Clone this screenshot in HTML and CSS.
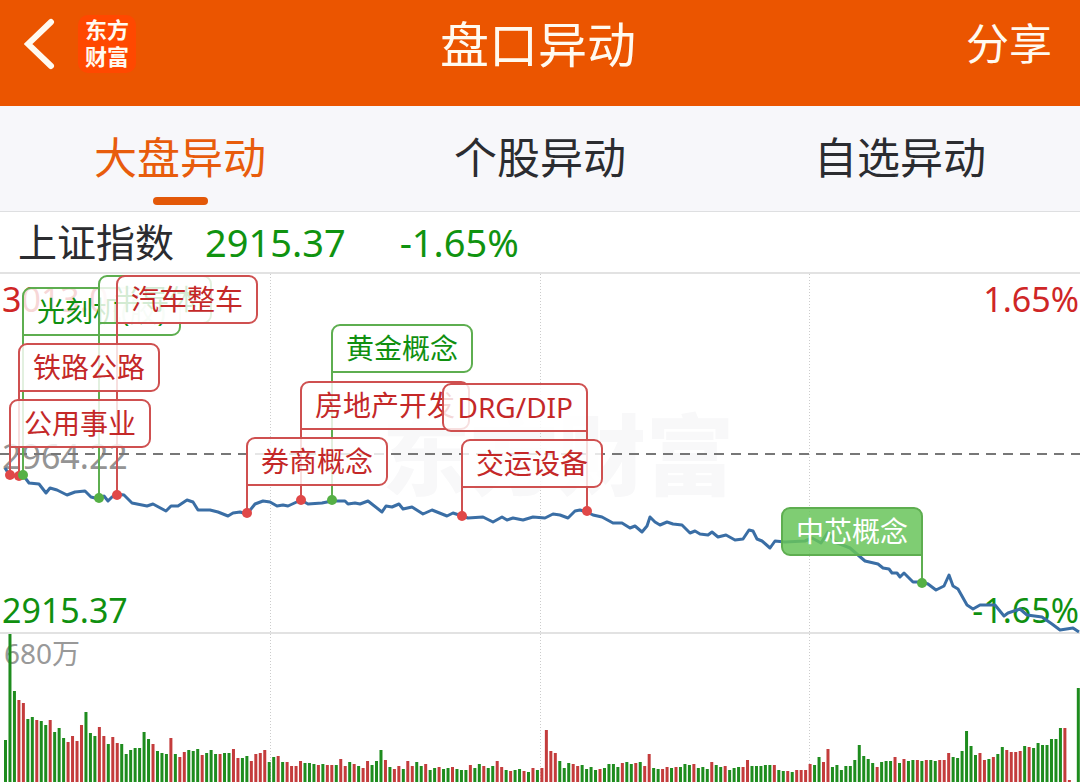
FILE: index.html
```html
<!DOCTYPE html>
<html lang="zh-CN">
<head>
<meta charset="utf-8">
<meta name="viewport" content="width=device-width, initial-scale=1">
<title>盘口异动</title>
<link rel="stylesheet" href="styles.css">
</head>
<body>
<header class="topbar">
  <div class="topbar-start">
    <button class="back" type="button" aria-label="返回">
      <svg class="back-icon" viewBox="0 0 32 52" aria-hidden="true"><path d="M27 4 4 26 27 48"/></svg>
    </button>
    <div class="logo">东方<br>财富</div>
  </div>
  <h1 class="title">盘口异动</h1>
  <button class="share" type="button">分享</button>
</header>
<nav class="tabs">
  <button class="tab tab-active" type="button">大盘异动</button>
  <button class="tab" type="button">个股异动</button>
  <button class="tab" type="button">自选异动</button>
</nav>
<main>
  <section class="quote">
    <h2 class="quote-name">上证指数</h2>
    <span class="quote-price">2915.37</span>
    <span class="quote-change">-1.65%</span>
  </section>
  <section class="chart" aria-label="上证指数分时图">
    <div class="watermark" aria-hidden="true">东方财富</div>
    <span class="axis axis-high up">3013.07</span>
    <span class="axis axis-high axis-right up">1.65%</span>
    <span class="axis axis-mid">2964.22</span>
    <span class="axis axis-low down">2915.37</span>
    <span class="axis axis-low axis-right down">-1.65%</span>
    <span class="axis axis-volume">680万</span>
    <svg class="plot" viewBox="0 272 1080 510" preserveAspectRatio="none" aria-hidden="true">
      <path class="grid" d="M270.5 274V782M540.5 274V782M809.5 274V782"/>
      <path class="rule" d="M0 273H1080M0 633H1080"/>
      <path class="mid" d="M0 454H1080"/>
      <g id="volume"></g>
      <polyline class="price" points="5,468 10,476 23,475 29,483 39,484 46,493 50,488 57,490 67,495 75,492 85,491 91,497 99,499 104,496 108,501 112,497 117,494 124,495 132,503 147,506 153,504 166,511 171,506 178,506 187,500 193,502 198,510 210,510 218,512 228,516 233,513 240,512 247,514 255,504 263,501 270,502 277,506 283,505 288,506 301,500 308,504 322,503 332,501 345,501 348,504 355,503 360,504 368,501 382,512 386,506 392,507 399,504 403,509 412,507 423,514 432,510 447,516 453,513 462,516 468,518 483,517 493,522 502,517 507,520 513,518 523,520 533,517 545,518 553,514 560,515 568,518 575,511 580,510 587,512 593,515 602,517 613,523 622,523 630,528 635,526 642,532 647,526 650,517 655,522 660,525 667,522 673,524 682,525 690,533 695,531 700,534 708,535 712,532 718,537 726,535 735,540 743,539 749,530 753,531 757,539 762,541 770,548 775,541 785,542 805,541 812,538 821,543 828,532 835,542 850,548 858,555 865,561 878,564 883,568 889,569 892,573 897,573 900,577 904,573 913,582 922,582 928,584 936,590 944,586 949,575 953,586 958,589 967,605 973,609 980,605 995,605 1004,616 1008,613 1020,609 1027,615 1042,617 1052,624 1060,630 1073,628 1079,632"/>
    </svg>
    <div id="flags"></div>
  </section>
</main>
<script src="chart.js"></script>
</body>
</html>
```
FILE: styles.css
```css
* { box-sizing: border-box; }

body {
  margin: 0;
  background: #fff;
  color: #2b2c30;
  font-family: "Noto Sans", "Noto Sans CJK SC", sans-serif;
}

button {
  padding: 0;
  border: 0;
  background: none;
  color: inherit;
  font: inherit;
  cursor: pointer;
}

.topbar {
  display: grid;
  grid-template-columns: 1fr auto 1fr;
  align-items: center;
  height: 106px;
  padding: 0 28px 18px 24px;
  background: #eb5500;
  color: #fffaf0;
}
.topbar-start { display: flex; align-items: center; gap: 22px; }
.back { display: flex; }
.back-icon { width: 32px; height: 52px; fill: none; stroke: currentColor; stroke-width: 6; stroke-linecap: round; }
.logo {
  width: 58px;
  padding: 0 0 4px;
  border-radius: 10px;
  background: #ff4800;
  font: 700 22px/27px "Noto Sans CJK SC", sans-serif;
  text-align: center;
}
.title { margin: 0; font-size: 49px; font-weight: 400; line-height: 60px; }
.share { justify-self: end; font-size: 43px; line-height: 60px; }

.tabs {
  display: grid;
  grid-template-columns: repeat(3, 1fr);
  height: 106px;
  border-bottom: 1px solid #dedfe1;
  background: #f7f7fa;
}
.tab {
  display: flex;
  flex-direction: column;
  align-items: center;
  gap: 7px;
  padding-top: 20px;
  font-size: 43px;
  line-height: 64px;
}
.tab-active { color: #e85c0c; }
.tab-active::after { content: ""; width: 55px; height: 8px; border-radius: 4px; background: #e35808; }

.quote {
  display: flex;
  align-items: center;
  height: 60px;
  padding-left: 18px;
  font-size: 38px;
  line-height: 60px;
}
.quote-name { margin: 0; font-size: 39px; font-weight: 400; }
.quote-price { margin-left: 31px; color: #109310; }
.quote-change { margin-left: 54px; color: #109310; }

.chart { position: relative; height: 510px; overflow: hidden; }
.plot { position: absolute; inset: 0; width: 100%; height: 100%; }
.watermark {
  position: absolute;
  top: 128px;
  left: 0;
  right: 0;
  padding-left: 36px;
  color: #f8f8f9;
  font: 900 88px/100px "Noto Sans CJK SC", sans-serif;
  text-align: center;
}

.axis { position: absolute; left: 2px; font-size: 34px; line-height: 40px; }
.axis-right { left: auto; right: 1px; }
.axis-high { top: 7px; }
.axis-mid { top: 164px; color: #949494; }
.axis-low { top: 318px; }
.axis-volume { top: 361px; left: 4px; color: #999; font-size: 28px; }
.up { color: #cf2626; }
.down { color: #109010; }

.grid, .rule, .mid, .price { fill: none; vector-effect: non-scaling-stroke; }
.grid { stroke: #ccc; stroke-dasharray: 1 2; }
.rule { stroke: #e2e2e2; stroke-width: 2; }
.mid { stroke: #777; stroke-width: 2; stroke-dasharray: 10 7; }
.price { stroke: #3a6ea5; stroke-width: 3; stroke-linejoin: round; }
.bar-up { fill: #c43c3c; }
.bar-down { fill: #1e8c1e; }

.flag {
  --edge: #cf5050;
  position: absolute;
  padding: 0 13px;
  border: 2px solid var(--edge);
  border-radius: 9px 9px 9px 0;
  background: rgba(255, 255, 255, 0.82);
  color: #c42828;
  font-size: 28px;
  line-height: 45px;
  white-space: nowrap;
}
.flag::before {
  content: "";
  position: absolute;
  top: 100%;
  left: -2px;
  width: 2px;
  height: var(--drop);
  background: var(--edge);
}
.flag::after {
  content: "";
  position: absolute;
  z-index: 1;
  top: calc(100% + var(--drop) - 5px);
  left: -6px;
  width: 10px;
  height: 10px;
  border-radius: 50%;
  background: #e04848;
}
.flag-down { --edge: #5eae50; color: #109010; }
.flag-down::after { z-index: 2; background: #55b045; }
.flag-left { border-radius: 9px 9px 0 9px; }
.flag-left::before { left: auto; right: -2px; }
.flag-left::after { left: auto; right: -6px; }
.flag-solid { background: rgba(104, 196, 90, 0.85); color: #fff; }
```
FILE: chart.js
```js
const SVG_NS = "http://www.w3.org/2000/svg";

// One entry per minute: direction (g = down, r = up) and bar height.
const volume = `
g42 g148 g91 r82 r79 g63 g65 r62 g61 g57 r62 g50 g54 g44 r40 r46 r41 r57 g70 g49
g46 r55 r46 g38 r45 r39 g38 g28 g32 g34 g34 g50 g43 r38 g31 g29 g28 r44 g28 r25
r30 g32 g31 g33 r27 g29 g32 g28 r28 g29 g29 r33 r24 g24 g26 r21 r28 r29 r32 g20
g25 r26 g20 r20 r16 r16 r21 g19 g19 g18 r17 g18 r17 r17 g17 r23 r16 g20 r18 g16
r14 r21 g17 g21 g32 r22 g15 r13 r16 g13 r21 r16 g20 g16 r18 g12 g14 r15 g13 g14
r15 g13 g12 g12 r17 g14 g18 r16 g14 g16 r21 r15 g12 r11 g12 g13 r11 g10 r14 g12
r14 r52 r31 r29 g21 g14 g19 r18 r16 g17 g13 g15 g12 r13 g14 g18 g18 g15 r19 g20
g18 r19 g20 r16 r28 g14 g13 r13 r15 g14 r15 g15 g18 g17 r18 g14 g15 g13 r20 g17
g15 r16 g12 g14 g15 r15 r22 g16 g16 g16 g17 g17 r17 g12 g11 r11 g10 r12 r12 r12
r18 g17 g25 r20 r33 g15 g17 g12 g16 g16 g22 g37 g26 g23 g19 r15 g20 g21 g21 r25
g19 r23 g21 g22 r22 g21 r22 g22 g21 r22 r22 r29 g25 g24 g31 g51 g36 g27 r29 r22
g23 r25 g28 g35 r32 r30 r30 r31 g36 r35 g34 g39 g37 g37 g43 g43 g54 r54 r2 g0 g94
`.trim().split(/\s+/);

const volumeLayer = document.getElementById("volume");
volume.forEach((entry, i) => {
  const height = Number(entry.slice(1));
  const bar = document.createElementNS(SVG_NS, "rect");
  bar.setAttribute("class", entry[0] === "r" ? "bar-up" : "bar-down");
  bar.setAttribute("x", (5.5 + i * 4.47 - 1.5).toFixed(2));
  bar.setAttribute("y", 782 - height);
  bar.setAttribute("width", 3);
  bar.setAttribute("height", height);
  volumeLayer.append(bar);
});

// x and end locate the marked point on the price line, y is the flag's top edge.
const flags = [
  { text: "光刻机(胶)", x: 23, y: 287, end: 475, kind: "flag-down" },
  { text: "半导体", x: 99, y: 275, end: 498, kind: "flag-down" },
  { text: "汽车整车", x: 117, y: 275, end: 495 },
  { text: "铁路公路", x: 19, y: 343, end: 476 },
  { text: "公用事业", x: 10, y: 399, end: 475 },
  { text: "黄金概念", x: 332, y: 324, end: 500, kind: "flag-down" },
  { text: "房地产开发", x: 301, y: 381, end: 500 },
  { text: "券商概念", x: 247, y: 437, end: 513 },
  { text: "DRG/DIP", x: 587, y: 383, end: 511, kind: "flag-left" },
  { text: "交运设备", x: 462, y: 439, end: 516 },
  { text: "中芯概念", x: 922, y: 507, end: 583, kind: "flag-down flag-left flag-solid" },
];

const flagLayer = document.getElementById("flags");
flags.forEach(({ text, x, y, end, kind = "" }) => {
  const flag = document.createElement("button");
  flag.type = "button";
  flag.className = `flag ${kind}`;
  flag.textContent = text;
  flag.style.top = `${y - 272}px`;
  flag.style.setProperty("--drop", `${end - y - 47}px`);
  if (kind.includes("flag-left")) {
    flag.style.right = `calc(${100 - x / 10.8}% - 1px)`;
  } else {
    flag.style.left = `calc(${x / 10.8}% - 1px)`;
  }
  flagLayer.append(flag);
});
```
